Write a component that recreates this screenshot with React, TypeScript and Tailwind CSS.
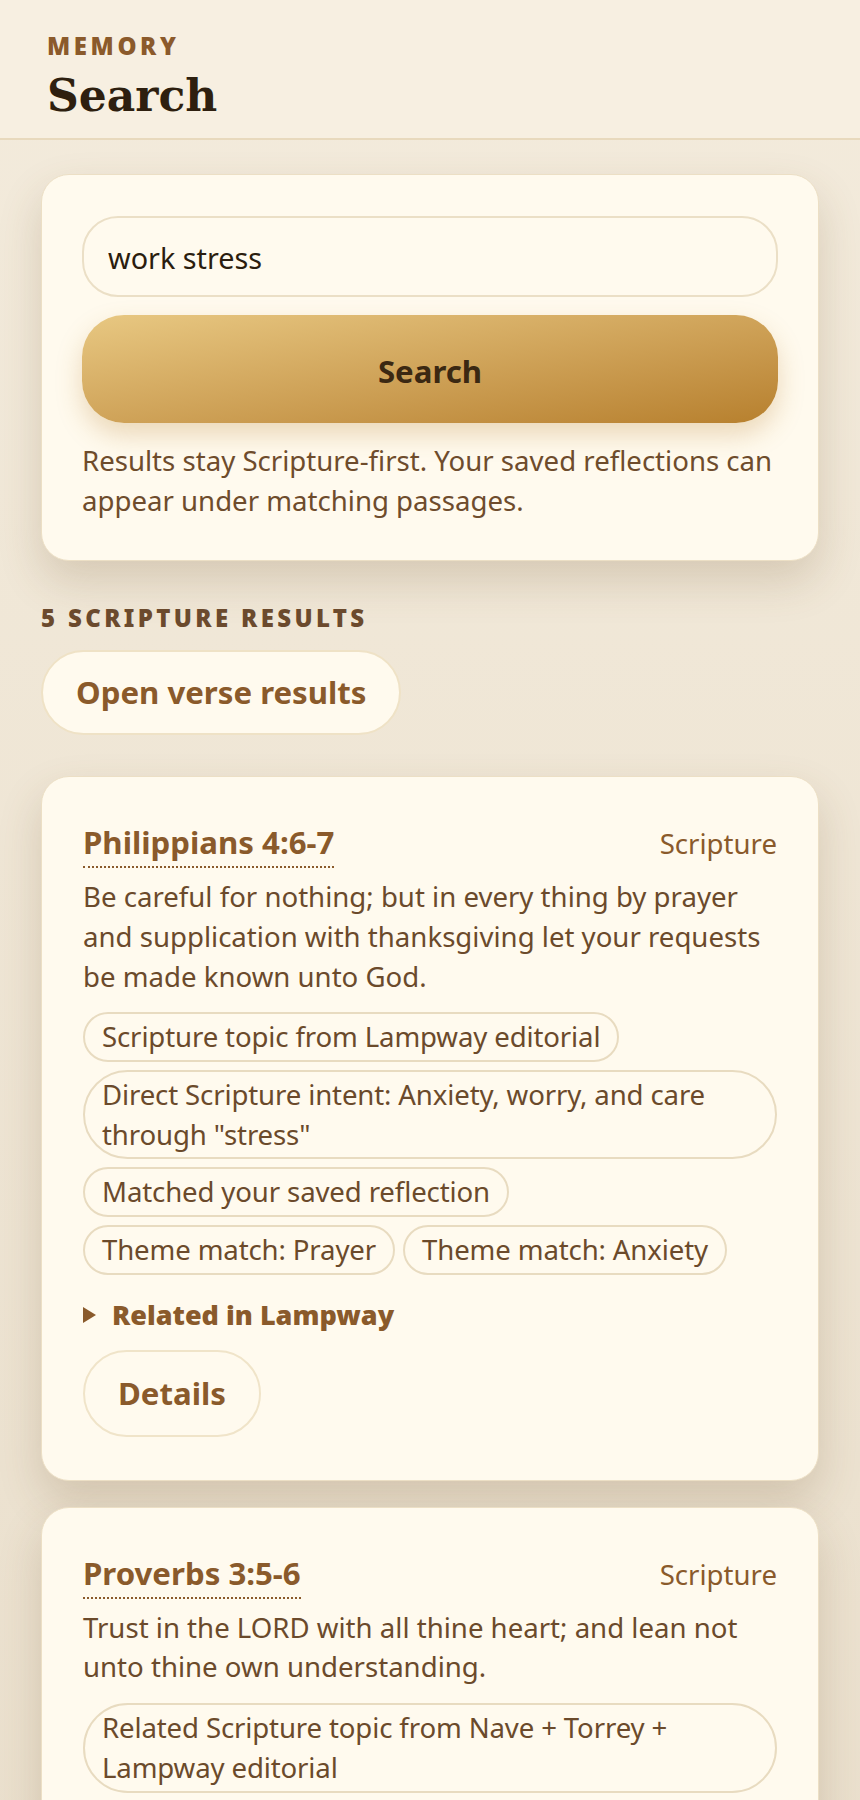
import React from "react";

type Result = {
  ref: string;
  text: string;
  chips: string[];
};

const results: Result[] = [
  {
    ref: "Philippians 4:6-7",
    text: "Be careful for nothing; but in every thing by prayer and supplication with thanksgiving let your requests be made known unto God.",
    chips: [
      "Scripture topic from Lampway editorial",
      'Direct Scripture intent: Anxiety, worry, and care through "stress"',
      "Matched your saved reflection",
      "Theme match: Prayer",
      "Theme match: Anxiety",
    ],
  },
  {
    ref: "Proverbs 3:5-6",
    text: "Trust in the LORD with all thine heart; and lean not unto thine own understanding.",
    chips: [
      "Related Scripture topic from Nave + Torrey + Lampway editorial",
      "Matched your saved reflection",
      "Theme match: Trust",
    ],
  },
];

function ResultCard({ r }: { r: Result }) {
  return (
    <article className="rounded-[28px] border border-[#ecdfc5] bg-[#fffaee] px-[41px] pb-[43px] pt-[43px] shadow-[0_20px_44px_rgba(110,80,40,0.2)]">
      <div className="flex items-start justify-between">
        <a className="inline-block border-b-2 border-dotted border-[#8a5a2b] pb-[1px] text-[31.2px] font-bold leading-[1.44] text-[#8a5a2b]">
          {r.ref}
        </a>
        <span className="pt-[4px] text-[27.6px] leading-[1.44] text-[#8a5a2b]">Scripture</span>
      </div>
      <p className="mt-[9px] text-[27.6px] leading-[1.44] text-[#6b4a2b]">{r.text}</p>
      <div className="mt-[16px] flex flex-wrap gap-[8px]">
        {r.chips.map((c) => (
          <span
            key={c}
            className="rounded-full border-2 border-[#e8dbc0] px-[17px] py-[3px] text-[27.6px] leading-[1.44] tracking-[-0.005em] text-[#6b4a2b]"
          >
            {c}
          </span>
        ))}
      </div>
      <div className="mt-[21px] flex items-center gap-[16px] text-[#8a5a2b]">
        <svg width="13" height="16" viewBox="0 0 13 16" className="shrink-0">
          <polygon points="0,0 13,8 0,16" fill="#8a5a2b" />
        </svg>
        <span className="text-[27px] font-black leading-[1.44]">Related in Lampway</span>
      </div>
      <button className="mt-[15px] rounded-full border-2 border-[#f0e4c9] bg-[#fffaee] px-[33px] py-[19px] text-[31.2px] font-bold leading-[1.44] text-[#8a5a2b]">
        Details
      </button>
    </article>
  );
}

export default function App() {
  return (
    <div className="min-h-[1800px] bg-gradient-to-b from-[#f3ebdc] to-[#e9decb] font-['Noto_Sans',sans-serif]">
      <header className="border-b-2 border-[#e8d9bd] bg-[#f7efe1] pb-[14px] pl-[47px] pt-[32px]">
        <div className="text-[24px] font-black uppercase leading-[1.2] tracking-[0.15em] text-[#8b5a2b]">Memory</div>
        <h1 className="mt-[7px] font-['DejaVu_Serif',serif] text-[44px] font-bold leading-[56px] text-[#2e1f0f]">
          Search
        </h1>
      </header>

      <main className="px-[41px] pt-[34px]">
        <section className="flex flex-col gap-[18px] rounded-[28px] border border-[#ecdfc5] bg-[#fffaee] px-[40px] pb-[39px] pt-[41px] shadow-[0_20px_44px_rgba(110,80,40,0.2)]">
          <input
            readOnly
            value="work stress"
            className="block w-full rounded-[36px] border-2 border-[#ebdfc6] bg-[#fffaee] px-[24px] pb-[17px] pt-[19px] text-[28.8px] leading-[1.44] text-[#2b1d0e] outline-none"
          />
          <button className="rounded-[42px] bg-gradient-to-br from-[#e8c882] to-[#b7802d] pb-[29px] pt-[34px] text-[31.2px] font-bold leading-[1.44] text-[#3b2812] shadow-[0_12px_26px_rgba(184,129,48,0.28)]">
            Search
          </button>
          <p className="text-[27.6px] leading-[1.44] text-[#6e4c2c]">
            Results stay Scripture-first. Your saved reflections can appear under matching passages.
          </p>
        </section>

        <div className="mt-[40px] text-[24px] font-black uppercase leading-[1.44] tracking-[0.14em] text-[#6b4a2d]">
          5 Scripture results
        </div>
        <button className="mt-[15px] rounded-full border-2 border-[#efe2c6] bg-[#fffaee] px-[33px] py-[18px] text-[31.2px] font-bold leading-[1.44] text-[#8a5a2b]">
          Open verse results
        </button>

        <div className="mt-[41px] flex flex-col gap-[26px]">
          {results.map((r) => (
            <ResultCard key={r.ref} r={r} />
          ))}
        </div>
      </main>
    </div>
  );
}
